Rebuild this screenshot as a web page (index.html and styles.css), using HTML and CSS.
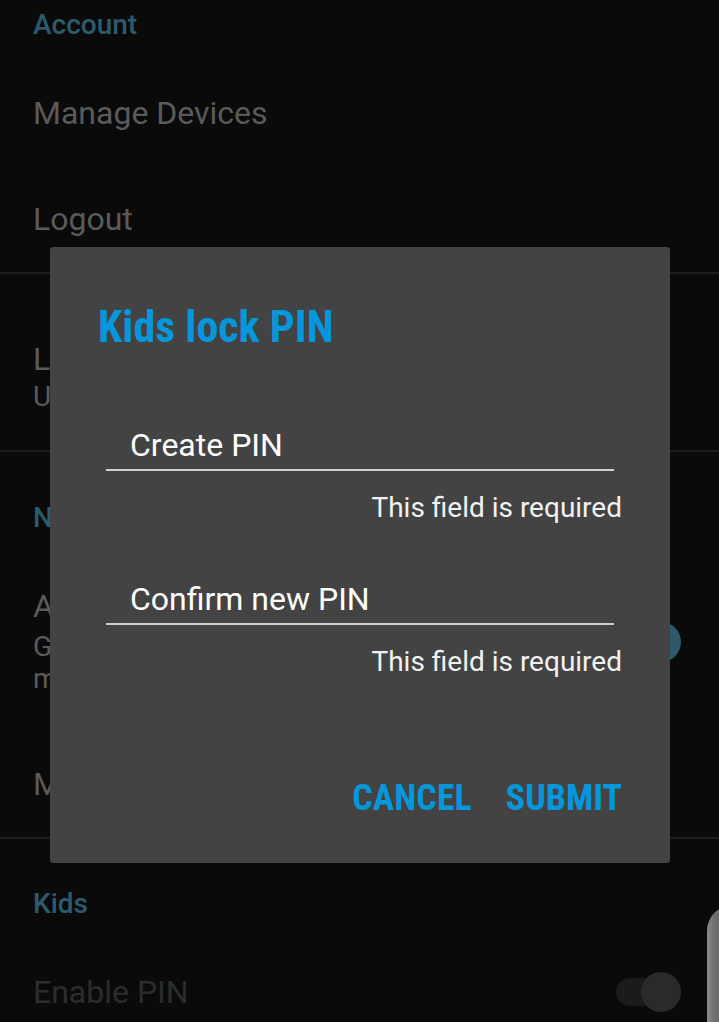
FILE: index.html
```html
<!DOCTYPE html>
<html lang="en">
<head>
    <meta charset="UTF-8">
    <meta name="viewport" content="width=device-width, initial-scale=1.0">
    <title>Settings - Kids lock PIN</title>
    <link rel="stylesheet" href="styles.css">
</head>
<body>
<div class="screen">

    <!-- settings list behind the dialog -->
    <div class="group account">
        <div class="group-title">Account</div>
        <div class="pref"><span class="pref-title">Manage Devices</span></div>
        <div class="pref"><span class="pref-title">Logout</span></div>
    </div>

    <div class="group language">
        <div class="pref">
            <div>
                <div class="pref-title">Language</div>
                <div class="pref-summary">Use device</div>
            </div>
        </div>
    </div>

    <div class="group notifications">
        <div class="group-title">Notifications</div>
        <div class="pref pref-alerts">
            <div>
                <div class="pref-title">Allow alerts</div>
                <div class="pref-summary summary-first">Get notified about new</div>
                <div class="pref-summary">movies and series</div>
            </div>
            <span class="switch on"></span>
        </div>
        <div class="pref pref-mobile"><span class="pref-title">Mobile data</span></div>
    </div>

    <div class="group kids">
        <div class="group-title">Kids</div>
        <div class="pref pref-pin">
            <span class="pref-title">Enable PIN</span>
            <span class="switch"></span>
        </div>
    </div>

    <div class="edge-handle"></div>

    <!-- dialog -->
    <div class="dialog">
        <h2 class="dialog-title">Kids lock PIN</h2>

        <div class="field">Create PIN</div>
        <div class="field-error">This field is required</div>

        <div class="field field-confirm">Confirm new PIN</div>
        <div class="field-error">This field is required</div>

        <div class="dialog-actions">
            <button>CANCEL</button>
            <button>SUBMIT</button>
        </div>
    </div>

</div>
</body>
</html>
```

FILE: styles.css
```css
/* General page */
body {
    margin: 0;
    background-color: #0a0a0a;
    font-family: Roboto, "Noto Sans", sans-serif;
}

.screen {
    position: relative;
    width: 719px;
    height: 1022px;
    overflow: hidden;
}

/* Settings list */
.group {
    border-bottom: 2px solid #1c1c1c;
}

.group-title {
    padding: 0 33px;
    font-size: 28px;
    line-height: 30px;
    font-weight: 500;
    color: #2b5b6c;
}

.pref {
    display: flex;
    align-items: center;
    justify-content: space-between;
    padding: 0 38px 0 33px;
    color: #5a5a5a;
}

.pref-title {
    font-size: 32px;
    line-height: 36px;
}

.pref-summary {
    font-size: 28px;
    line-height: 32px;
}

.account .group-title {
    padding-top: 10px;
    padding-bottom: 20px;
}

.account .pref {
    height: 106px;
}

.language .pref {
    padding-top: 67px;
    padding-bottom: 33px;
}

.language .pref-summary {
    line-height: 40px;
}

.notifications .group-title {
    padding-top: 51px;
}

.pref-alerts {
    margin-top: 55px;
}

.summary-first {
    margin-top: 7px;
}

.pref-mobile {
    margin-top: 71px;
    padding-bottom: 35px;
}

.kids {
    border-bottom: none;
}

.kids .group-title {
    padding-top: 50px;
}

.pref-pin {
    margin-top: 53px;
    color: #2c2c2c;
}

/* toggle switches */
.switch {
    position: relative;
    width: 65px;
    height: 40px;
    flex-shrink: 0;
}

.switch::before {
    content: "";
    position: absolute;
    left: 0;
    top: 6px;
    width: 56px;
    height: 28px;
    border-radius: 14px;
    background-color: #1b1b1b;
}

.switch::after {
    content: "";
    position: absolute;
    right: 0;
    top: 0;
    width: 40px;
    height: 40px;
    border-radius: 50%;
    background-color: #2a2a2a;
}

.switch.on::before {
    background-color: #1c3a46;
}

.switch.on::after {
    background-color: #2c5a6b;
}

.edge-handle {
    position: absolute;
    left: 707px;
    top: 905px;
    width: 30px;
    height: 140px;
    border-radius: 26px 0 0 0;
    background: linear-gradient(to right, #8c8c8c, #6e6e6e 25%, #5a5a5a);
}

/* Dialog */
.dialog {
    position: absolute;
    left: 50px;
    top: 247px;
    width: 620px;
    height: 616px;
    box-sizing: border-box;
    padding: 55px 48px 0;
    background-color: #434343;
    border-radius: 3px;
}

.dialog-title {
    margin: 0;
    font-family: "Liberation Sans Narrow", "Roboto Condensed", Roboto, sans-serif;
    font-size: 44px;
    line-height: 50px;
    font-weight: 700;
    color: #0596dc;
}

.field {
    margin: 73px 8px 0;
    padding: 0 0 4px 24px;
    border-bottom: 2px solid #cfcfcf;
    font-size: 32px;
    line-height: 40px;
    color: #ffffff;
}

.field-confirm {
    margin-top: 53px;
}

.field-error {
    margin-top: 19px;
    text-align: right;
    font-size: 28px;
    line-height: 36px;
    color: #f2f2f2;
}

.dialog-actions {
    display: flex;
    justify-content: flex-end;
    gap: 34px;
    margin-top: 98px;
}

.dialog-actions button {
    padding: 0;
    border: none;
    background: none;
    font-family: "Liberation Sans Narrow", "Roboto Condensed", Roboto, sans-serif;
    font-size: 36px;
    line-height: 40px;
    font-weight: 700;
    color: #0596dc;
    cursor: pointer;
}
```
